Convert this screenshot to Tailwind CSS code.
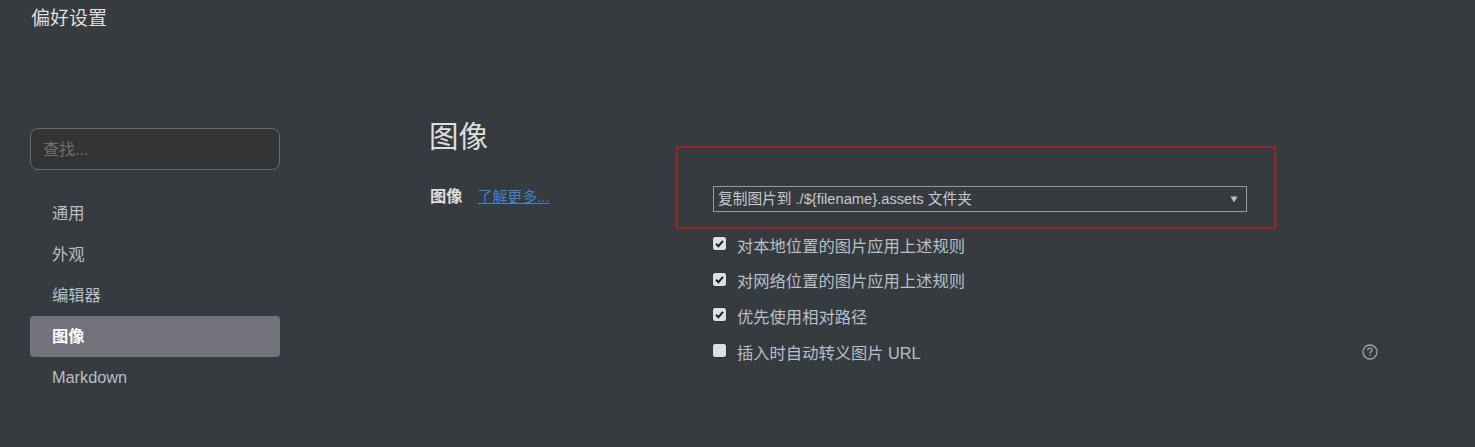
<!DOCTYPE html>
<html lang="zh-CN">
<head>
    <meta charset="UTF-8">
    <title>偏好设置</title>
    <script src="https://cdn.jsdelivr.net/npm/@tailwindcss/browser@4"></script>
</head>
<body class="bg-[#363b40] h-[447px] overflow-hidden font-['Liberation_Sans','Noto_Sans_CJK_SC',sans-serif] text-[16.3px] text-[#b8bfc6]">
    <!-- title bar -->
    <header class="h-[54px] border-b border-[#31363a] pl-[31px] pt-[6px] text-[19px] leading-[26px] text-[#dedede]">偏好设置</header>

    <div class="flex">
        <!-- sidebar -->
        <aside class="w-[430px] pl-[30px] pt-[74px] shrink-0">
            <input type="text" placeholder="查找..." class="block w-[250px] h-[42px] px-[12px] pt-[2px] bg-[#333333] border border-[#6b6b6b] rounded-[8px] text-[16px] placeholder:text-[#707070] outline-none">
            <nav class="w-[250px] mt-[23px] flex flex-col">
                <a class="h-[41px] pl-[22px] leading-[41px]">通用</a>
                <a class="h-[41px] pl-[22px] leading-[41px]">外观</a>
                <a class="h-[41px] pl-[22px] leading-[41px]">编辑器</a>
                <a class="h-[41px] pl-[22px] leading-[41px] bg-[#72727d] rounded-[4px] text-white font-bold">图像</a>
                <a class="h-[41px] pl-[22px] leading-[41px]">Markdown</a>
            </nav>
        </aside>

        <!-- content -->
        <main class="flex-1 pt-[64px]">
            <h1 class="ml-[-1px] text-[29.5px] leading-[38px] text-[#dedede]">图像</h1>
            <div class="flex mt-[-10px]">
                <div class="w-[246px] shrink-0 pt-[40px] leading-[20px] flex">
                    <span class="font-bold text-[#dedede]">图像</span>
                    <a class="ml-[15px] mt-[1px] text-[14.9px] text-[#4183c4] underline">了解更多...</a>
                </div>
                <div class="flex-1">
                    <!-- red highlight around the select -->
                    <div class="w-[600px] h-[83px] border-2 border-[#9b2525] rounded-[3px] pl-[35px] pt-[38px]">
                        <div class="relative w-[534px]">
                            <select class="block w-full h-[26px] pl-[4px] border border-[#999999] appearance-none bg-transparent text-[14.7px] leading-[24px] text-[#c6c9cc] outline-none">
                                <option>复制图片到 ./${filename}.assets 文件夹</option>
                            </select>
                            <svg class="absolute right-[9px] top-[10px] w-[8px] h-[7px]" viewBox="0 0 8 7"><path d="M0.5 0.5H7.5L4 6.5Z" fill="#b8bfc6"/></svg>
                        </div>
                    </div>
                    <!-- options -->
                    <div class="pl-[37px] w-[702px] flex flex-col mt-[-1px]">
                        <label class="flex items-center h-[36px]">
                            <span class="w-[13px] h-[13px] mt-[-5px] rounded-[2px] bg-[#e0e0e0] shadow-[0_0_1px_#000] flex items-center justify-center">
                                <svg class="w-[11px] h-[11px]" viewBox="0 0 11 11"><path d="M2 5.8L4.4 8.2L9 2.8" fill="none" stroke="#222" stroke-width="2"/></svg>
                            </span>
                            <span class="ml-[11px]">对本地位置的图片应用上述规则</span>
                        </label>
                        <label class="flex items-center h-[35px]">
                            <span class="w-[13px] h-[13px] mt-[-5px] rounded-[2px] bg-[#e0e0e0] shadow-[0_0_1px_#000] flex items-center justify-center">
                                <svg class="w-[11px] h-[11px]" viewBox="0 0 11 11"><path d="M2 5.8L4.4 8.2L9 2.8" fill="none" stroke="#222" stroke-width="2"/></svg>
                            </span>
                            <span class="ml-[11px]">对网络位置的图片应用上述规则</span>
                        </label>
                        <label class="flex items-center h-[36px]">
                            <span class="w-[13px] h-[13px] mt-[-5px] rounded-[2px] bg-[#e0e0e0] shadow-[0_0_1px_#000] flex items-center justify-center">
                                <svg class="w-[11px] h-[11px]" viewBox="0 0 11 11"><path d="M2 5.8L4.4 8.2L9 2.8" fill="none" stroke="#222" stroke-width="2"/></svg>
                            </span>
                            <span class="ml-[11px]">优先使用相对路径</span>
                        </label>
                        <label class="flex items-center h-[36px]">
                            <span class="w-[13px] h-[13px] mt-[-5px] rounded-[2px] bg-[#e0e0e0] shadow-[0_0_1px_#000]"></span>
                            <span class="ml-[11px]">插入时自动转义图片 URL</span>
                            <svg class="ml-auto mt-[-3px] w-[16px] h-[16px]" viewBox="0 0 16 16" fill="none" stroke="#a0a4a8" stroke-width="1.3">
                                <circle cx="8" cy="8" r="7"/>
                                <path d="M5.8 6.3C5.8 5 6.8 4.2 8 4.2C9.3 4.2 10.2 5 10.2 6.1C10.2 7.6 8 7.7 8 9.4"/>
                                <path d="M8 10.6V12"/>
                            </svg>
                        </label>
                    </div>
                </div>
            </div>
        </main>
    </div>
</body>
</html>
